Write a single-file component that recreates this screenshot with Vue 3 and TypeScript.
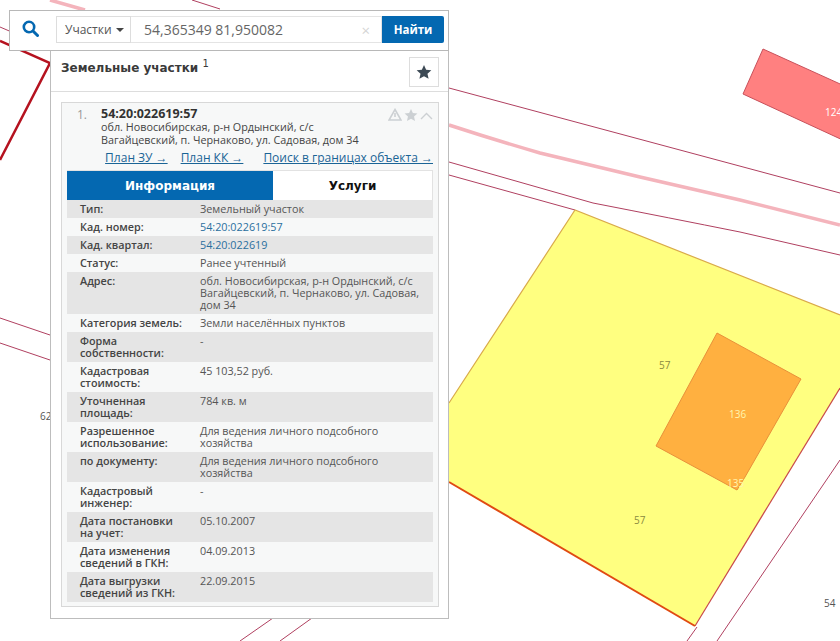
<template>
  <div class="page">
    <svg class="map" width="840" height="641" viewBox="0 0 840 641">
      <polygon points="763,49 860,93 860,148 743,94" fill="#ff8080" stroke="#c8505a" />
      <path d="M192,0 L220,9 M449,88 L840,193" class="road" />
      <path d="M50,0 L85,10 M449,125 Q495,140 540,153 L640,177 L740,200 L840,225" fill="none" stroke="#f4b4bc" stroke-width="3.5" />
      <path d="M449,162 L593,203 Q670,218 740,232 L840,255" class="road" />
      <path d="M449,175 L575,210" class="road" />
      <path d="M0,27 L14,33 M0,318 L50,335 M0,343 L50,360" class="road" />
      <path d="M0,41 L50,63 L0,160" fill="none" stroke="#b5121f" stroke-width="2.5" />
      <polygon points="575,210 840,315 840,388 695,626 449,482 449,403" fill="#ffff80" />
      <path d="M449,403 L575,210 L840,315" fill="none" stroke="#d9aa4a" stroke-width="1.2" />
      <path d="M840,388 L695,626" fill="none" stroke="#c94a4a" stroke-width="1.2" />
      <path d="M449,482 L695,626" fill="none" stroke="#e04a12" stroke-width="2" />
      <polygon points="717,333 801,379 745,477 737,490 656,446" fill="#ffb040" stroke="#e8903a" />
      <path d="M840,460 L717,641 M697,627 L687,641 M273,618 L240,641 M312,618 L280,641" class="road" />
      <text x="659" y="369" class="lbl olive">57</text>
      <text x="634" y="524" class="lbl olive">57</text>
      <text x="824" y="607" class="lbl dark">54</text>
      <text x="40" y="420" class="lbl dark">62</text>
      <text x="729" y="418" class="lbl pale">136</text>
      <text x="727" y="487" class="lbl pale">135</text>
      <text x="825" y="116" class="lbl white">124</text>
    </svg>

    <div class="widget">
      <div class="search">
        <svg class="search-icon" width="17" height="17" viewBox="0 0 17 17">
          <circle cx="7" cy="7" r="5.2" fill="none" stroke="#0468b1" stroke-width="2.6" />
          <path d="M11 11 L15.5 15.5" stroke="#0468b1" stroke-width="3" stroke-linecap="round" />
        </svg>
        <div class="search-box">
          <div class="select">Участки <span class="caret"></span></div>
          <div class="query">
            <span>54,365349 81,950082</span>
            <span class="clear">×</span>
          </div>
          <button class="find">Найти</button>
        </div>
      </div>

      <div class="panel">
        <div class="panel-head">
          <h2>Земельные участки <sup>1</sup></h2>
          <button class="fav">
            <svg width="16" height="16" viewBox="0 0 24 24"><path :d="starPath" fill="#3d4a55" /></svg>
          </button>
        </div>

        <div class="card">
          <div class="card-head">
            <span class="num">1.</span>
            <div class="card-title">
              <strong>54:20:022619:57</strong>
              <p>обл. Новосибирская, р-н Ордынский, с/с<br />Вагайцевский, п. Чернаково, ул. Садовая, дом 34</p>
            </div>
            <div class="card-icons">
              <svg width="14" height="13" viewBox="0 0 14 13"><path d="M7,1.5 L13,12 L1,12 Z M7,5 V9" fill="none" stroke="#ccd0d3" stroke-width="1.6" /></svg>
              <svg width="14" height="14" viewBox="0 0 24 24"><path :d="starPath" fill="#ccd0d3" /></svg>
              <svg width="13" height="8" viewBox="0 0 13 8"><path d="M1,7 L6.5,1.5 L12,7" fill="none" stroke="#ccd0d3" stroke-width="1.4" /></svg>
            </div>
          </div>
          <div class="links">
            <a>План ЗУ →</a>
            <a>План КК →</a>
            <a class="far">Поиск в границах объекта →</a>
          </div>
          <div class="tabs">
            <div class="tab active">Информация</div>
            <div class="tab">Услуги</div>
          </div>
          <div class="rows">
            <div v-for="row in rows" :key="row.label" class="row">
              <div class="label">{{ row.label }}</div>
              <div class="value" :class="{ link: row.link }">{{ row.value }}</div>
            </div>
          </div>
        </div>
      </div>
    </div>
  </div>
</template>

<script setup lang="ts">
interface InfoRow {
  label: string
  value: string
  link?: boolean
}

const starPath = 'M12 1.5l3.2 7.1 7.8.8-5.8 5.2 1.7 7.6L12 18.3l-6.9 3.9 1.7-7.6L1 9.4l7.8-.8z'

const rows: InfoRow[] = [
  { label: 'Тип:', value: 'Земельный участок' },
  { label: 'Кад. номер:', value: '54:20:022619:57', link: true },
  { label: 'Кад. квартал:', value: '54:20:022619', link: true },
  { label: 'Статус:', value: 'Ранее учтенный' },
  { label: 'Адрес:', value: 'обл. Новосибирская, р-н Ордынский, с/с Вагайцевский, п. Чернаково, ул. Садовая, дом 34' },
  { label: 'Категория земель:', value: 'Земли населённых пунктов' },
  { label: 'Форма собственности:', value: '-' },
  { label: 'Кадастровая стоимость:', value: '45 103,52 руб.' },
  { label: 'Уточненная площадь:', value: '784 кв. м' },
  { label: 'Разрешенное использование:', value: 'Для ведения личного подсобного хозяйства' },
  { label: 'по документу:', value: 'Для ведения личного подсобного хозяйства' },
  { label: 'Кадастровый инженер:', value: '-' },
  { label: 'Дата постановки на учет:', value: '05.10.2007' },
  { label: 'Дата изменения сведений в ГКН:', value: '04.09.2013' },
  { label: 'Дата выгрузки сведений из ГКН:', value: '22.09.2015' }
]
</script>

<style scoped>
* { box-sizing: border-box }
.page {
  width: 840px;
  height: 641px;
  position: relative;
  overflow: hidden;
  background: #fff;
  padding: 10px 0 0 9px;
  font-family: "Open Sans", sans-serif;
  font-size: 10.8px;
  color: #444;
}
.map { position: absolute; left: 0; top: 0 }
.road { fill: none; stroke: #b04060; stroke-width: 1 }
.lbl { font-size: 10px; font-family: "Open Sans", sans-serif }
.olive { fill: #8a8a40 }
.dark { fill: #555 }
.white { fill: #fff }
.pale { fill: #fff6b0 }
.widget { position: relative; width: 440px }
.search {
  height: 41px;
  background: #fff;
  border: 1px solid #b8b8b8;
  display: flex;
  align-items: center;
  padding: 0 4px 2px 12px;
}
.search-icon { margin-right: 17px; margin-top: -2px }
.search-box { display: flex; height: 27px; flex: 1 }
.select {
  width: 75px;
  border: 1px solid #ddd;
  display: flex;
  align-items: center;
  gap: 4px;
  padding-left: 8px;
  font-size: 12px;
  color: #555;
}
.caret { border: 4px solid transparent; border-top-color: #444; border-bottom: 0 }
.query {
  flex: 1;
  border: 1px solid #e4e4e4;
  border-left: 0;
  display: flex;
  align-items: center;
  justify-content: space-between;
  padding: 0 11px 0 13px;
  font-size: 14px;
  color: #666;
}
.clear { color: #d5d5d5; font-size: 15px }
.find {
  width: 62px;
  border: 0;
  border-radius: 0 2px 2px 0;
  background: #0468b1;
  color: #fff;
  font-family: "Open Sans", sans-serif;
  font-size: 11.5px;
  font-weight: 700;
}
.panel {
  margin-left: 41px;
  width: 399px;
  height: 568px;
  background: #fff;
  border: 1px solid #bdbdbd;
  border-top: 0;
}
.panel-head {
  height: 41px;
  border-bottom: 1px solid #ddd;
  display: flex;
  justify-content: space-between;
  padding: 6px 9px 0 10px;
}
.panel-head h2 { margin: 4px 0 0; font-family: "DejaVu Sans", sans-serif; font-size: 12px; font-weight: 700; color: #3a3a3a }
.panel-head sup { font-size: 10px; font-weight: 400; position: relative; top: -5px; vertical-align: baseline }
.fav {
  width: 30px;
  height: 30px;
  background: #fff;
  border: 1px solid #ddd;
  padding: 0;
  display: flex;
  align-items: center;
  justify-content: center;
}
.card {
  margin: 10px 0 0 10px;
  width: 378px;
  height: 505px;
  background: #f7f8f8;
  border: 1px solid #d8d8d8;
  padding: 0 5px;
}
.card-head { display: flex; padding: 3px 0 0 10px; height: 46px }
.num { width: 24px; font-size: 12px; color: #999 }
.card-title { flex: 1 }
.card-title strong { font-size: 12.5px; color: #333; line-height: 15px; display: block }
.card-title p { margin: 0; color: #444; line-height: 12.5px }
.card-icons { display: flex; gap: 2px; align-items: flex-start; padding-top: 2px; height: 16px }
.card-icons svg:last-child { margin-top: 4px }
.links { display: flex; justify-content: flex-end; gap: 13px; height: 21px; font-size: 12px; color: #1a6496; white-space: nowrap }
.links a { text-decoration: underline }
.links .far { margin-left: 7px }
.tabs { display: flex; height: 30px; background: #fff; border: 1px solid #e2e2e2; border-left: 0; border-bottom: 0 }
.tab {
  flex: 1;
  display: flex;
  align-items: center;
  justify-content: center;
  font-family: "DejaVu Sans", sans-serif;
  font-size: 12px;
  font-weight: 700;
  color: #111;
}
.tab.active { flex: 0 0 206px; background: #0468b1; color: #fff }
.row { display: flex; padding: 3px 0 3px 13px; line-height: 12px; }
.row:nth-child(odd) { background: #e5e5e5 }
.label { width: 104px; margin-right: 16px; font-weight: 600; color: #444; flex: none }
.value { width: 222px; color: #555 }
.value.link { color: #2a6f9e }
</style>
